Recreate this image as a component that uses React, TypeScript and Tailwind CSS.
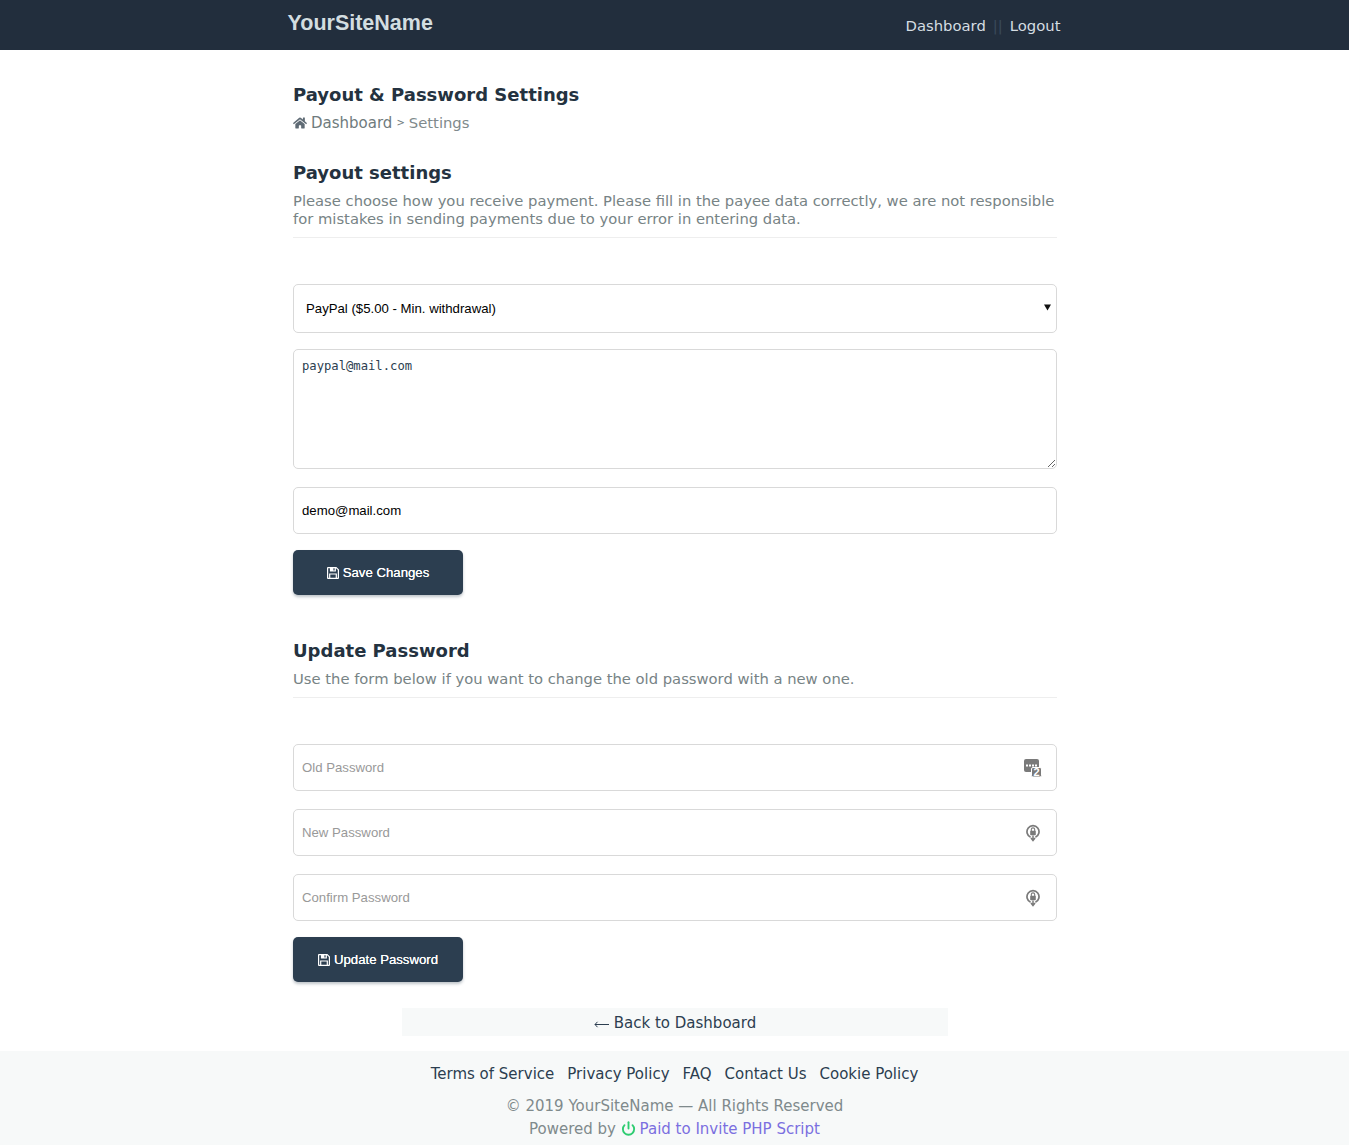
import React from 'react';
import { FaHome } from 'react-icons/fa';
import { Power } from 'lucide-react';

function SaveIcon() {
  return (
    <svg width="12" height="12" viewBox="0 0 12 12" className="text-white">
      <path
        fillRule="evenodd"
        fill="currentColor"
        d="M1 0h8.4L12 2.6V11a1 1 0 0 1-1 1H1a1 1 0 0 1-1-1V1a1 1 0 0 1 1-1zM1.2 1.2v9.6h.9V6.4h7.8v4.4h.9V3.1L9 1.2h-.1v3.3H2.9V1.2zM3.3 7.6v3.2h5.4V7.6zM6.4 1.3v2.2h1.2V1.3z"
      />
    </svg>
  );
}

function OldPasswordIcon() {
  return (
    <svg width="18" height="18" viewBox="0 0 18 18" className="text-[#7a7a7a]">
      <rect x="0" y="0" width="15" height="13" rx="2" fill="currentColor" />
      <rect x="2" y="5.5" width="2" height="2" fill="#fff" />
      <rect x="5" y="5.5" width="2" height="2" fill="#fff" />
      <rect x="8" y="5.5" width="2" height="2" fill="#fff" />
      <rect x="11" y="5.5" width="2" height="2" fill="#fff" />
      <rect x="7.5" y="8.5" width="10" height="9.5" rx="1.5" fill="currentColor" stroke="#fff" strokeWidth="1" />
      <text x="12.5" y="17" textAnchor="middle" fontSize="11" fontWeight="700" fill="#fff" fontFamily="Liberation Sans, sans-serif">2</text>
    </svg>
  );
}

function NewPasswordIcon() {
  return (
    <svg width="14" height="18" viewBox="0 0 14 18" className="text-[#7a7a7a]">
      <path d="M4.6 13.2a6 6 0 1 1 4.8 0" fill="none" stroke="currentColor" strokeWidth="1.7" />
      <rect x="4.2" y="6.8" width="5.6" height="4.4" rx="0.6" fill="currentColor" />
      <path d="M5.3 7V5.6a1.7 1.7 0 0 1 3.4 0V7" fill="none" stroke="currentColor" strokeWidth="1.1" />
      <path d="M7 11.5v4M5 14l2 2.6L9 14" fill="none" stroke="currentColor" strokeWidth="1.5" />
    </svg>
  );
}

function PasswordField({ placeholder, icon, iconRight }: { placeholder: string; icon: React.ReactNode; iconRight: string }) {
  return (
    <div className="relative">
      <input
        type="password"
        placeholder={placeholder}
        className="block w-full h-[47px] rounded-[5px] border border-[#d9d9d9] bg-white px-[8px] text-[13.2px] text-black font-['Liberation_Sans',sans-serif] placeholder:text-[#999] outline-none"
      />
      <span className={`absolute top-[15px] flex ${iconRight}`}>{icon}</span>
    </div>
  );
}

function SubmitButton({ label }: { label: string }) {
  return (
    <button
      type="button"
      className="flex items-center justify-center gap-[4px] w-[170px] h-[45px] rounded-[5px] bg-[#2c3e50] text-white text-[13.2px] font-['Liberation_Sans',sans-serif] [text-shadow:0_0_0.4px_#fff] shadow-[0_2px_3px_rgba(44,62,80,0.3)]"
    >
      <SaveIcon />
      {label}
    </button>
  );
}

function SectionHead({ title, children }: { title: string; children: React.ReactNode }) {
  return (
    <div className="border-b border-[#eeeeee]">
      <h2 className="pt-[1px] text-[18px] leading-[24px] font-bold text-[#243240]">{title}</h2>
      <p className="mt-[7px] pb-[9px] text-[14.75px] leading-[18px] text-[#778385]">{children}</p>
    </div>
  );
}

export default function App() {
  return (
    <div className="min-h-[1145px] bg-white font-['DejaVu_Sans',sans-serif] flex flex-col">
      <header className="h-[50px] bg-[#222e3d]">
        <div className="mx-auto w-[772px] h-full flex items-center justify-between">
          <a className="text-[21.5px] font-bold text-[#d3dde0] font-['Liberation_Sans',sans-serif] -mt-[4px] -ml-[1px]">YourSiteName</a>
          <nav className="flex items-center text-[14.8px] text-[#d5dde2] mt-[2px]">
            <a>Dashboard</a>
            <span className="mx-[7px] text-[#3a4a5a]">||</span>
            <a>Logout</a>
          </nav>
        </div>
      </header>

      <main className="mx-auto w-[765px] pl-[1px] pt-[33px]">
        <h1 className="text-[18px] leading-[24px] font-bold text-[#243240]">Payout &amp; Password Settings</h1>
        <div className="mt-[6px] flex items-center text-[15px] leading-[20px] text-[#6f7b7d]">
          <FaHome size={14} className="mr-[4px] text-[#5f6b75]" />
          <span>Dashboard</span>
          <span className="mx-[4px] text-[10px]">&gt;</span>
          <span className="text-[#7f8a8c] text-[14.8px]">Settings</span>
        </div>

        <div className="mt-[27px]">
          <SectionHead title="Payout settings">
            Please choose how you receive payment. Please fill in the payee data correctly, we are not responsible for mistakes in sending payments due to your error in entering data.
          </SectionHead>
        </div>

        <form className="mt-[46px]">
          <div className="relative">
            <select className="block w-full h-[49px] appearance-none rounded-[5px] border border-[#d9d9d9] bg-white pl-[12px] text-[13.2px] text-black font-['Liberation_Sans',sans-serif] outline-none">
              <option>PayPal ($5.00 - Min. withdrawal)</option>
            </select>
            <svg width="7" height="7" viewBox="0 0 7 7" className="absolute right-[6px] top-[20px] pointer-events-none">
              <path d="M0 0.5h7L3.5 6.5z" fill="#111" />
            </svg>
          </div>
          <textarea
            defaultValue="paypal@mail.com"
            className="block w-full h-[120px] mt-[16px] rounded-[5px] border border-[#d9d9d9] bg-white px-[8px] py-[9px] text-[12.2px] leading-[15px] text-[#2c3e50] font-['DejaVu_Sans_Mono',monospace] outline-none"
          />
          <input
            defaultValue="demo@mail.com"
            className="block w-full h-[47px] mt-[18px] rounded-[5px] border border-[#d9d9d9] bg-white px-[8px] text-[13.2px] text-black font-['Liberation_Sans',sans-serif] outline-none"
          />
          <div className="mt-[16px]">
            <SubmitButton label="Save Changes" />
          </div>
        </form>

        <div className="mt-[43px]">
          <SectionHead title="Update Password">
            Use the form below if you want to change the old password with a new one.
          </SectionHead>
        </div>

        <form className="mt-[46px] flex flex-col gap-[18px]">
          <PasswordField placeholder="Old Password" icon={<OldPasswordIcon />} iconRight="right-[15px]" />
          <PasswordField placeholder="New Password" icon={<NewPasswordIcon />} iconRight="right-[17px]" />
          <PasswordField placeholder="Confirm Password" icon={<NewPasswordIcon />} iconRight="right-[17px]" />
        </form>
        <div className="mt-[16px]">
          <SubmitButton label="Update Password" />
        </div>

        <a className="flex items-center justify-center gap-[5px] mx-auto mt-[26px] w-[546px] h-[28px] pt-[1px] bg-[#f7f9f9] text-[15px] leading-[28px] text-[#2c3e50]">
          <svg width="15" height="7" viewBox="0 0 15 7" className="mt-[3px] text-[#2c3e50]">
            <path d="M15 3.5H1M3.5 0.8 1 3.5l2.5 2.7" fill="none" stroke="currentColor" strokeWidth="1" />
          </svg>
          Back to Dashboard
        </a>
      </main>

      <footer className="mt-[15px] flex-1 bg-[#f7f9f9] text-center text-[15px]">
        <div className="pt-[13px] flex justify-center gap-[13px] leading-[20px] text-[#2c3e50]">
          <a>Terms of Service</a>
          <a>Privacy Policy</a>
          <a>FAQ</a>
          <a>Contact Us</a>
          <a>Cookie Policy</a>
        </div>
        <p className="mt-[11px] leading-[23px] text-[#7f8a8c]">© 2019 YourSiteName — All Rights Reserved</p>
        <p className="leading-[23px] text-[#7f8a8c]">
          Powered by <Power size={15} strokeWidth={3} className="inline align-[-2px] text-[#2ecc71]" />{' '}
          <a className="text-[#7b6fe0] -ml-[1px]">Paid to Invite PHP Script</a>
        </p>
      </footer>
    </div>
  );
}
